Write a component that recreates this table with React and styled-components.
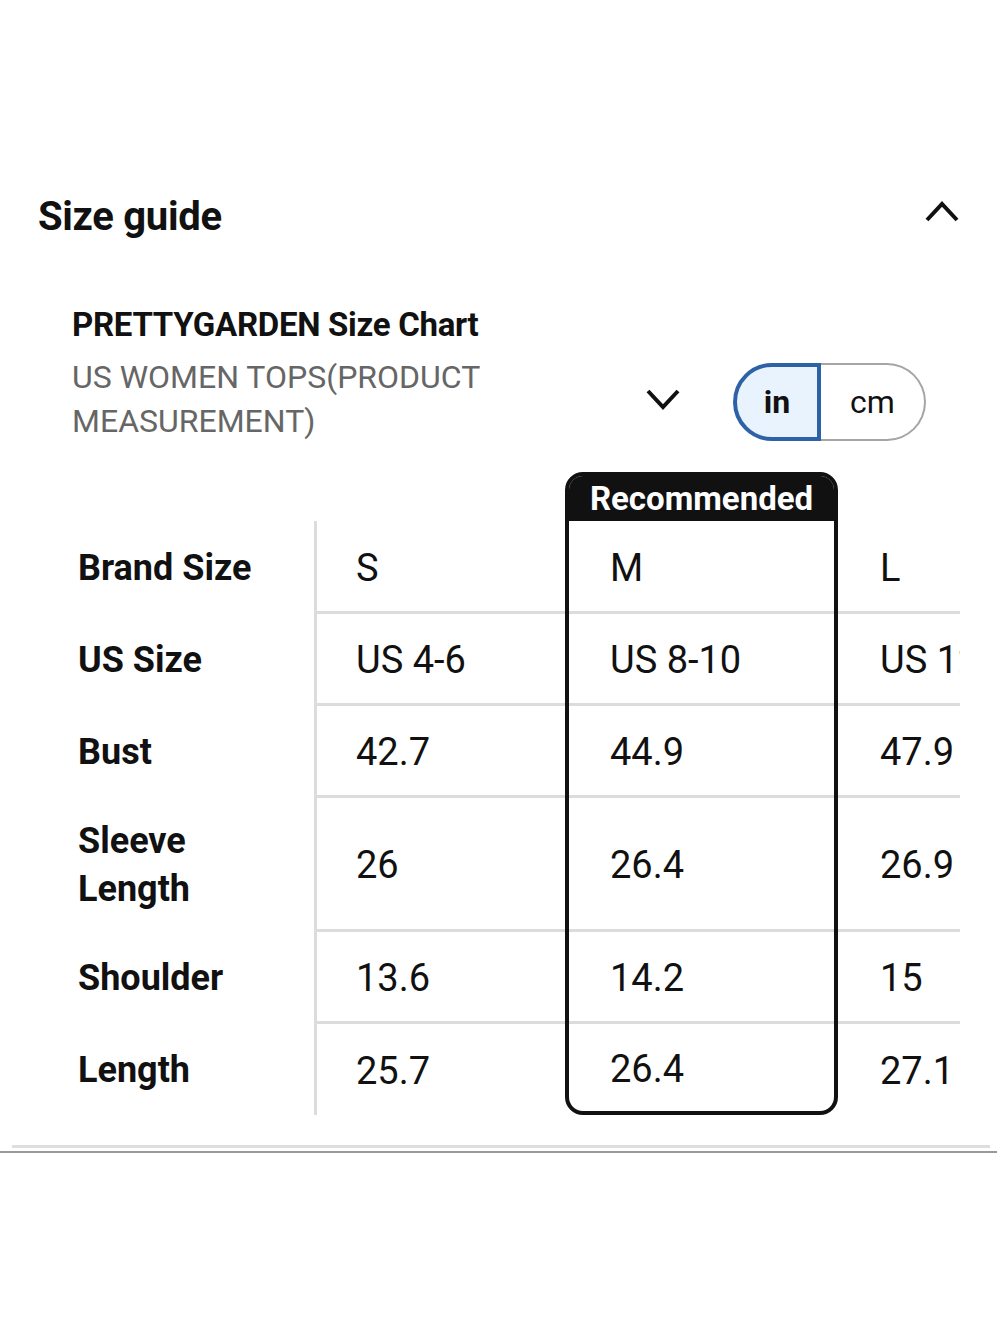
import React, { useState } from 'react'
import styled, { createGlobalStyle } from 'styled-components'

const GlobalStyle = createGlobalStyle`
  body {
    margin: 0;
    background: #fff;
    font-family: Roboto, 'Noto Sans', Arial, sans-serif;
    color: #111;
  }
`

const rows = [
  { label: 'Brand Size', height: 93, values: ['S', 'M', 'L'] },
  { label: 'US Size', height: 92, values: ['US 4-6', 'US 8-10', 'US 12-14'] },
  { label: 'Bust', height: 92, values: ['42.7', '44.9', '47.9'] },
  { label: 'Sleeve Length', height: 134, values: ['26', '26.4', '26.9'] },
  { label: 'Shoulder', height: 92, values: ['13.6', '14.2', '15'] },
  { label: 'Length', height: 91, values: ['25.7', '26.4', '27.1'] },
]

const Page = styled.div`
  width: 1000px;
  padding-top: 186px;
`

const SectionHeader = styled.div`
  display: flex;
  align-items: center;
  justify-content: space-between;
  padding: 0 40px 0 38px;
  height: 60px;
`

const SectionTitle = styled.h2`
  margin: 0;
  font-size: 40px;
  font-weight: 700;
  letter-spacing: -0.3px;
`

const Chevron = styled.svg`
  display: block;
  flex: none;
  margin-bottom: ${(p) => p.$lift || 0}px;
`

const ChartHead = styled.div`
  padding: 59px 75px 0 72px;
`

const ChartTitle = styled.div`
  font-size: 33px;
  font-weight: 700;
  line-height: 40px;
  letter-spacing: -0.3px;
`

const ChartRow = styled.div`
  display: flex;
  align-items: center;
  margin-top: 10px;
`

const Subtitle = styled.div`
  width: 520px;
  flex: none;
  font-size: 32px;
  line-height: 44px;
  color: #666;
`

const DropButton = styled.div`
  margin-left: 53px;
  margin-right: 52px;
`

const Toggle = styled.div`
  display: flex;
  height: 78px;
  margin-top: 6px;
`

const Segment = styled.div`
  display: flex;
  align-items: center;
  justify-content: center;
  box-sizing: border-box;
  height: 100%;
  width: ${(p) => (p.$active ? '88px' : '105px')};
  font-size: 32px;
  font-weight: ${(p) => (p.$active ? 700 : 400)};
  background: ${(p) => (p.$active ? '#e9f3fd' : '#fff')};
  border: ${(p) => (p.$active ? '4px solid #2d63a6' : '2px solid #a5a5a5')};
  border-left: ${(p) => (p.$active ? '4px solid #2d63a6' : 'none')};
  border-radius: ${(p) => (p.$active ? '39px 0 0 39px' : '0 39px 39px 0')};
  color: #111;
  cursor: pointer;
`

const TableWrap = styled.div`
  display: flex;
  align-items: flex-start;
  width: 882px;
  margin: 29px 0 0 78px;
  overflow: hidden;
`

const Column = styled.div`
  flex: none;
  width: ${(p) => p.$width}px;
  box-sizing: border-box;
  padding-top: 49px;
`

const RecColumn = styled.div`
  flex: none;
  width: ${(p) => p.$width}px;
  box-sizing: border-box;
  border: 4px solid #111;
  border-radius: 18px;
  overflow: hidden;
`

const RecBadge = styled.div`
  height: 45px;
  margin-top: -4px;
  padding-top: 4px;
  background: #111;
  color: #fff;
  font-size: 33px;
  font-weight: 700;
  display: flex;
  align-items: center;
  justify-content: center;
`

const CellStack = styled.div`
  border-left: ${(p) => (p.$divider ? '3px solid #dcdcdc' : 'none')};
`

const LabelCell = styled.div`
  display: flex;
  align-items: center;
  box-sizing: border-box;
  height: ${(p) => p.$h}px;
  font-size: 36px;
  font-weight: 700;
  line-height: 48px;
  width: 220px;
`

const ValueCell = styled.div`
  display: flex;
  align-items: center;
  box-sizing: border-box;
  height: ${(p) => p.$h}px;
  padding-left: ${(p) => p.$pad}px;
  padding-top: 3px;
  font-size: 38px;
  white-space: nowrap;
  border-bottom: ${(p) => (p.$last ? 'none' : '3px solid #dcdcdc')};
`

const Footer = styled.div`
  margin-top: 30px;
`

const LightRule = styled.div`
  height: 3px;
  margin: 0 10px 0 12px;
  background: #dedede;
`

const DarkRule = styled.div`
  height: 2px;
  margin: 3px 3px 0 0;
  background: #9a9a9a;
`

const ChevronUp = () => (
  <Chevron $lift={10} width="36" height="24" viewBox="0 0 36 24">
    <polyline points="3,21 18,5 33,21" fill="none" stroke="#111" strokeWidth="4" />
  </Chevron>
)

const ChevronDown = () => (
  <Chevron width="36" height="24" viewBox="0 0 36 24">
    <polyline points="3,4 18,20 33,4" fill="none" stroke="#111" strokeWidth="4" />
  </Chevron>
)

function Cells({ col, pad, trim }) {
  return rows.map((r, i) => (
    <ValueCell
      key={r.label}
      $h={i === rows.length - 1 ? r.height - trim : r.height}
      $pad={pad}
      $last={i === rows.length - 1}
    >
      {r.values[col]}
    </ValueCell>
  ))
}

export default function App() {
  const [unit, setUnit] = useState('in')

  return (
    <Page>
      <GlobalStyle />
      <SectionHeader>
        <SectionTitle>Size guide</SectionTitle>
        <ChevronUp />
      </SectionHeader>

      <ChartHead>
        <ChartTitle>PRETTYGARDEN Size Chart</ChartTitle>
        <ChartRow>
          <Subtitle>US WOMEN TOPS(PRODUCT MEASUREMENT)</Subtitle>
          <DropButton>
            <ChevronDown />
          </DropButton>
          <Toggle>
            <Segment $active={unit === 'in'} onClick={() => setUnit('in')}>
              in
            </Segment>
            <Segment $active={unit === 'cm'} onClick={() => setUnit('cm')}>
              cm
            </Segment>
          </Toggle>
        </ChartRow>
      </ChartHead>

      <TableWrap>
        <Column $width={236}>
          {rows.map((r) => (
            <LabelCell key={r.label} $h={r.height}>
              {r.label === 'Sleeve Length' ? (
                <span>
                  Sleeve
                  <br />
                  Length
                </span>
              ) : (
                r.label
              )}
            </LabelCell>
          ))}
        </Column>
        <Column $width={251}>
          <CellStack $divider>
            <Cells col={0} pad={39} trim={0} />
          </CellStack>
        </Column>
        <RecColumn $width={273}>
          <RecBadge>Recommended</RecBadge>
          <Cells col={1} pad={41} trim={4} />
        </RecColumn>
        <Column $width={300}>
          <Cells col={2} pad={42} trim={0} />
        </Column>
      </TableWrap>

      <Footer>
        <LightRule />
        <DarkRule />
      </Footer>
    </Page>
  )
}
